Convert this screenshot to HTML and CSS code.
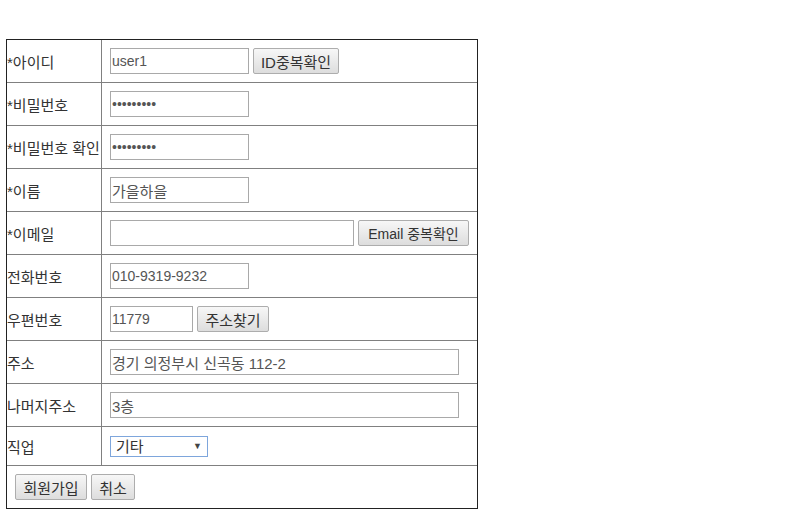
FILE: index.html
```html
<!DOCTYPE html>
<html lang="ko">
<head>
<meta charset="utf-8">
<title>회원가입</title>
<link rel="stylesheet" href="styles.css">
</head>
<body>
<div class="page">
  <form class="form">
    <div class="label">*아이디</div>
    <div class="value"><input class="in w139" type="text" value="user1"><button type="button" class="btn ko w86">ID중복확인</button></div>

    <div class="label">*비밀번호</div>
    <div class="value"><input class="in w139" type="password" value="123456789"></div>

    <div class="label">*비밀번호 확인</div>
    <div class="value"><input class="in w139" type="password" value="123456789"></div>

    <div class="label">*이름</div>
    <div class="value"><input class="in ko w139" type="text" value="가을하을"></div>

    <div class="label">*이메일</div>
    <div class="value"><input class="in w244" type="text" value=""><button type="button" class="btn w111">Email 중복확인</button></div>

    <div class="label">전화번호</div>
    <div class="value"><input class="in w139" type="text" value="010-9319-9232"></div>

    <div class="label">우편번호</div>
    <div class="value"><input class="in w83" type="text" value="11779"><button type="button" class="btn ko w72">주소찾기</button></div>

    <div class="label">주소</div>
    <div class="value"><input class="in ko w349" type="text" value="경기 의정부시 신곡동 112-2"></div>

    <div class="label">나머지주소</div>
    <div class="value"><input class="in ko w349" type="text" value="3층"></div>

    <div class="label short">직업</div>
    <div class="value short">
      <span class="sel">
        <select class="select">
          <option>회사원</option>
          <option>학생</option>
          <option selected>기타</option>
        </select>
        <span class="arrow">▼</span>
      </span>
    </div>

    <div class="actions">
      <button type="submit" class="btn ko w72">회원가입</button><button type="button" class="btn ko w44">취소</button>
    </div>
  </form>
</div>
</body>
</html>
```

FILE: styles.css
```css
html, body {
  margin: 0;
  padding: 0;
  background: #ffffff;
}

body {
  font-family: "Liberation Sans", "Noto Sans CJK KR", sans-serif;
  font-size: 14px;
  color: #333333;
}

.page {
  padding: 39px 0 0 6px;
}

.form {
  display: grid;
  grid-template-columns: 95px 375px;
  grid-template-rows: repeat(9, 43px) 39px 42px;
  width: 470px;
  border: 1px solid #222222;
}

.label,
.value {
  box-sizing: border-box;
  display: flex;
  align-items: center;
  border-bottom: 1px solid #808080;
}

.label {
  border-right: 1px solid #808080;
  white-space: nowrap;
  color: #333333;
  font-size: 15px;
  padding-left: 0;
}

.value {
  padding-left: 8px;
  gap: 4px;
}

.actions {
  grid-column: 1 / 3;
  display: flex;
  align-items: center;
  gap: 4px;
  padding-left: 8px;
}

.in {
  box-sizing: border-box;
  height: 26px;
  margin: 0;
  padding: 0 1px;
  border: 1px solid #a9a9a9;
  border-radius: 0;
  font-family: "Liberation Sans", "Noto Sans CJK KR", sans-serif;
  font-size: 14px;
  color: #555555;
  background: #ffffff;
  outline: none;
}

.in.ko,
.btn.ko {
  font-size: 15px;
}

.w139 { width: 139px; }
.w244 { width: 244px; }
.w83 { width: 83px; }
.w349 { width: 349px; }

.btn {
  box-sizing: border-box;
  height: 26px;
  margin: 0;
  padding: 0;
  border: 1px solid #adadad;
  border-radius: 2px;
  background: linear-gradient(#f7f7f7, #dddddd);
  font-family: "Liberation Sans", "Noto Sans CJK KR", sans-serif;
  font-size: 14px;
  color: #333333;
}

.w86 { width: 86px; }
.w111 { width: 111px; }
.w72 { width: 72px; }
.w44 { width: 44px; }

.sel {
  position: relative;
  display: inline-block;
  width: 98px;
  height: 21px;
}

.select {
  box-sizing: border-box;
  width: 98px;
  height: 21px;
  margin: 0;
  padding: 0 0 0 5px;
  border: 1px solid #7ea6dc;
  border-radius: 0;
  background: #ffffff;
  -webkit-appearance: none;
  appearance: none;
  font-family: "Liberation Sans", "Noto Sans CJK KR", sans-serif;
  font-size: 15px;
  color: #333333;
  outline: none;
}

.arrow {
  position: absolute;
  right: 6px;
  top: 4px;
  font-size: 9px;
  line-height: 12px;
  color: #444444;
  pointer-events: none;
}
```
